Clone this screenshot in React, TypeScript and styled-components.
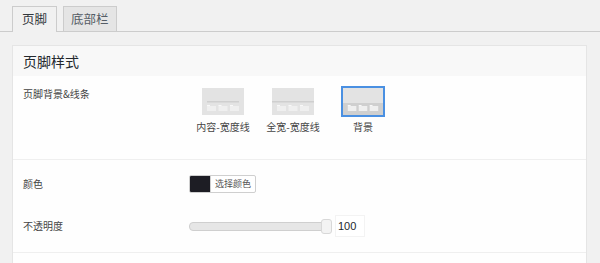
import React from "react";
import styled, { createGlobalStyle } from "styled-components";

const Global = createGlobalStyle`
  html, body { margin: 0; padding: 0; background: #f1f1f1; }
  body { font-family: "Noto Sans CJK SC", "Liberation Sans", sans-serif; color: #23282d; }
`;

const Page = styled.div`
  width: 600px;
  height: 263px;
  overflow: hidden;
  background: #f1f1f1;
`;

const TabBar = styled.div`
  display: flex;
  align-items: flex-end;
  gap: 6px;
  padding-left: 12px;
  border-bottom: 1px solid #cccccc;
  box-sizing: border-box;
  height: 32px;
`;

const Tab = styled.div<{ $active?: boolean }>`
  padding: 0 ${(p) => (p.$active ? "9px" : "7px")};
  box-sizing: border-box;
  border: 1px solid #cccccc;
  border-bottom: none;
  background: ${(p) => (p.$active ? "#f1f1f1" : "#e5e5e5")};
  color: ${(p) => (p.$active ? "#32373c" : "#555d66")};
  font-size: 12.5px;
  line-height: 24px;
  margin-bottom: ${(p) => (p.$active ? "-1px" : "0")};
  height: ${(p) => (p.$active ? "26px" : "25px")};
`;

const Panel = styled.div`
  margin: 13px 13px 0 12px;
  border: 1px solid #e5e5e5;
  background: #fefefe;
`;

const PanelHeader = styled.div`
  height: 30px;
  background: #f8f8f8;
  padding-left: 10px;
  font-size: 14px;
  line-height: 30px;
  color: #23282d;
`;

const Row = styled.div<{ $pad: string }>`
  display: flex;
  padding: ${(p) => p.$pad};
  border-bottom: 1px solid #efefef;
`;

const SubRows = styled.div`
  display: flex;
  flex-direction: column;
  padding: 14px 0 16px;
  border-bottom: 1px solid #efefef;
`;

const SubRow = styled.div`
  display: flex;
  align-items: center;
  height: 20px;
  & + & { margin-top: 22px; }
`;

const Label = styled.div`
  width: 166px;
  padding-left: 10px;
  font-size: 10px;
  color: #444;
  line-height: 14px;
  flex: none;
`;

const Options = styled.div`
  display: flex;
  gap: 8px;
  padding-left: 3px;
  margin-top: 1px;
`;

const Option = styled.div`
  width: 62px;
  display: flex;
  flex-direction: column;
  align-items: center;
`;

const Thumb = styled.div<{ $selected?: boolean }>`
  width: ${(p) => (p.$selected ? "40px" : "42px")};
  height: 27px;
  border: ${(p) => (p.$selected ? "2px solid #4a90e2" : "none")};
  margin-top: ${(p) => (p.$selected ? "-2px" : "0")};
  margin-bottom: ${(p) => (p.$selected ? "-2px" : "0")};
  background: #e4e4e4;
`;

const OptionLabel = styled.div`
  margin-top: 5px;
  font-size: 10px;
  line-height: 14px;
  color: #444;
  white-space: nowrap;
`;

const ThumbSvg = ({ kind }: { kind: "content" | "full" | "bg" }) => (
  <svg width="100%" height="100%" viewBox="0 0 42 27" preserveAspectRatio="none" style={{ display: "block" }}>
    <rect x="0" y="0" width="42" height="27" fill="#e3e3e3" />
    {kind === "content" && <rect x="5" y="13" width="32" height="1.5" fill="#cfcfcf" />}
    {kind === "full" && <rect x="0" y="13" width="42" height="1.5" fill="#cfcfcf" />}
    {kind === "bg" && <rect x="0" y="15" width="42" height="12" fill="#cfcfcf" />}
    <rect x="5" y="18" width="9" height="5" fill="#efefef" />
    <rect x="16.5" y="18" width="9" height="5" fill="#efefef" />
    <rect x="28" y="18" width="9" height="5" fill="#efefef" />
    <rect x="5" y="17" width="3" height="1" fill="#f8f8f8" />
    <rect x="16.5" y="17" width="3" height="1" fill="#f8f8f8" />
    <rect x="28" y="17" width="3" height="1" fill="#f8f8f8" />
  </svg>
);

const ColorPicker = styled.div`
  display: flex;
  align-items: stretch;
  height: 16px;
  border: 1px solid #cfcfcf;
  border-radius: 2px;
  background: #fff;
  overflow: hidden;
`;

const Swatch = styled.div`
  width: 20px;
  background: #1d1d24;
  border-right: 1px solid #cfcfcf;
`;

const PickButton = styled.div`
  padding: 0 4px;
  font-size: 9px;
  line-height: 16px;
  color: #555;
`;

const SliderWrap = styled.div`
  display: flex;
  align-items: center;
`;

const Track = styled.div`
  position: relative;
  width: 143px;
  height: 9px;
  background: #e6e6e6;
  border: 1px solid #cfcfcf;
  border-radius: 4px;
  box-sizing: border-box;
`;

const Handle = styled.div`
  position: absolute;
  right: -1px;
  top: -4px;
  width: 11px;
  height: 15px;
  background: #f3f3f3;
  border: 1px solid #d8d8d8;
  border-radius: 3px;
  box-sizing: border-box;
`;

const Value = styled.div`
  margin-left: 3px;
  width: 26px;
  height: 20px;
  border: 1px solid #f3f3f3;
  font-family: "Liberation Sans", Arial, sans-serif;
  font-size: 11px;
  line-height: 20px;
  padding-left: 2px;
  color: #23282d;
  background: #fff;
`;

const Spacer = styled.div`
  height: 30px;
`;

export default function App() {
  return (
    <Page>
      <Global />
      <TabBar>
        <Tab $active>页脚</Tab>
        <Tab>底部栏</Tab>
      </TabBar>
      <Panel>
        <PanelHeader>页脚样式</PanelHeader>
        <Row $pad="11px 0 25px">
          <Label>页脚背景&amp;线条</Label>
          <Options>
            <Option>
              <Thumb><ThumbSvg kind="content" /></Thumb>
              <OptionLabel>内容-宽度线</OptionLabel>
            </Option>
            <Option>
              <Thumb><ThumbSvg kind="full" /></Thumb>
              <OptionLabel>全宽-宽度线</OptionLabel>
            </Option>
            <Option>
              <Thumb $selected><ThumbSvg kind="bg" /></Thumb>
              <OptionLabel>背景</OptionLabel>
            </Option>
          </Options>
        </Row>
        <SubRows>
          <SubRow>
            <Label>颜色</Label>
            <ColorPicker>
              <Swatch />
              <PickButton>选择颜色</PickButton>
            </ColorPicker>
          </SubRow>
          <SubRow>
            <Label>不透明度</Label>
            <SliderWrap>
              <Track><Handle /></Track>
              <Value>100</Value>
            </SliderWrap>
          </SubRow>
        </SubRows>
        <Spacer />
      </Panel>
    </Page>
  );
}
